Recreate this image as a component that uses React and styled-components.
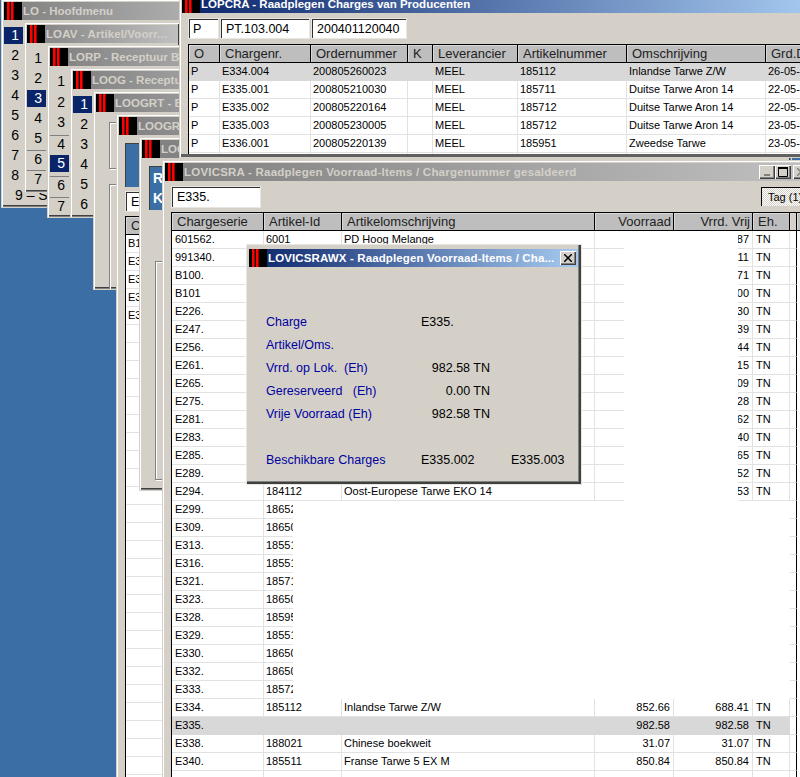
import React from 'react';
import styled, { createGlobalStyle } from 'styled-components';

const GlobalStyle = createGlobalStyle`
	html, body {
		margin: 0;
		padding: 0;
		background: #3a6ea5;
	}
	* {
		box-sizing: border-box;
	}
`;

const Desktop = styled.div`
	position: relative;
	width: 800px;
	height: 777px;
	overflow: hidden;
	background: #3a6ea5;
	font-family: 'Liberation Sans', Arial, sans-serif;
	font-size: 11px;
	color: #000;
`;

const Window = styled.div`
	position: absolute;
	left: ${(p) => p.$x}px;
	top: ${(p) => p.$y}px;
	width: ${(p) => p.$w}px;
	height: ${(p) => p.$h}px;
	padding: 2px;
	overflow: hidden;
	background: #d4d0c8;
	border: 1px solid #d4d0c8;
	box-shadow: inset 1px 1px 0 #fff, inset -1px -1px 0 #808080, inset -2px -2px 0 #404040;
`;

const ProducerWindow = styled(Window)`
	padding-bottom: 3px;
	box-shadow: inset 1px 1px 0 #fff, inset 0 -3px 0 #606060;
`;

const Dialog = styled(Window)`
	padding: 4px 3px 3px 2px;
	border-color: #e8e6e0;
	box-shadow: inset -1px -1px 0 #404040, inset -2px -2px 0 #404040, inset -3px -3px 0 #808080;
`;

const Pane = styled.div`
	height: 100%;
	overflow: hidden;
`;

const TitleBar = styled.div`
	display: flex;
	align-items: center;
	height: 18px;
	padding-right: 2px;
	background: ${(p) =>
		p.$active ? 'linear-gradient(90deg, #0a246a, #a6caf0)' : 'linear-gradient(90deg, #808080, #c0c0c0)'};
	color: ${(p) => (p.$active ? '#fff' : '#d4d0c8')};
`;

const TitleText = styled.span`
	flex: 1;
	margin-left: 1px;
	overflow: hidden;
	white-space: nowrap;
	font-family: 'Liberation Sans', Arial, sans-serif;
	font-weight: bold;
	font-size: 11.5px;
	letter-spacing: ${(p) => p.$track || 0}px;
`;

const CaptionButton = styled.button`
	display: flex;
	flex: none;
	align-items: center;
	justify-content: center;
	width: 16px;
	height: 14px;
	margin-left: ${(p) => p.$gap || 0}px;
	padding: 0;
	border: 0;
	background: #d4d0c8;
	box-shadow: inset 1px 1px 0 #fff, inset -1px -1px 0 #404040, inset -2px -2px 0 #808080;
`;

const MenuList = styled.div`
	display: flex;
	flex-direction: column;
	padding-top: 7px;
`;

const MenuItem = styled.div`
	display: flex;
	align-items: flex-start;
	height: ${(p) => p.$step || 20}px;
	font-size: 14px;
	line-height: 16px;
	white-space: nowrap;
`;

const MenuNumber = styled.span`
	width: ${(p) => (p.$wide ? 'auto' : '19px')};
	height: 17px;
	margin-left: ${(p) => (p.$wide ? '11px' : '0')};
	padding-right: 4px;
	text-align: right;
	background: ${(p) => (p.$selected ? '#0a246a' : 'transparent')};
	color: ${(p) => (p.$selected ? '#fff' : '#000')};
	border-top: ${(p) => (p.$rule ? '1px solid #808080' : '0')};
`;

const GroupStack = styled.div`
	display: flex;
	flex-direction: column;
	gap: 15px;
	padding: ${(p) => p.$top}px 0 0 ${(p) => p.$left}px;
`;

const GroupBox = styled.div`
	width: 60px;
	height: ${(p) => p.$h}px;
	border: 1px solid #808080;
	box-shadow: 1px 1px 0 #fff, inset 1px 1px 0 #fff;
`;

const BluePanel = styled.div`
	display: flex;
	flex-direction: column;
	gap: 3px;
	width: 120px;
	height: 44px;
	margin: 8px 0 0 ${(p) => p.$left}px;
	padding: 3px 0 0 3px;
	background: #3a6ea5;
	border-top: 1px solid #404040;
	border-left: 1px solid #404040;
	color: #fff;
	font-weight: bold;
	font-size: 14px;
	line-height: 17px;
`;

const Field = styled.div`
	flex: none;
	width: ${(p) => p.$w}px;
	height: ${(p) => p.$h || 21}px;
	padding-left: ${(p) => p.$pad || 4}px;
	background: #fff;
	border-top: 2px solid #303030;
	border-left: 2px solid #303030;
	border-right: 1px solid #d4d0c8;
	border-bottom: 1px solid #d4d0c8;
	outline: 1px solid #e8e6e0;
	outline-offset: -1px;
	font-size: 12.5px;
	line-height: 18px;
	white-space: nowrap;
	overflow: hidden;
`;

const FieldRow = styled.div`
	display: flex;
	gap: 1px;
	margin: ${(p) => p.$top}px 0 0 6px;
`;

const ToolRow = styled.div`
	display: flex;
	align-items: flex-start;
	margin: 5px 0 0 6px;
`;

const TagButton = styled.div`
	flex: none;
	width: 60px;
	height: 19px;
	margin: 1px 0 0 500px;
	padding: 2px 0 0 6px;
	border-top: 1px solid #000;
	border-left: 1px solid #000;
	background: repeating-conic-gradient(#fff 0 25%, #d4d0c8 0 50%) 0 0 / 2px 2px;
	font-size: 11px;
	line-height: 15px;
`;

const Table = styled.div`
	width: ${(p) => p.$w}px;
	margin: ${(p) => p.$top}px 0 0 ${(p) => p.$left}px;
	border-left: 1px solid #000;
	background: #fff;
`;

const HeaderRow = styled.div`
	display: grid;
	grid-template-columns: ${(p) => p.$cols};
	height: 19px;
	border-top: 1px solid #000;
	border-bottom: 1px solid #000;
	background: #bebebe;
`;

const HeaderCell = styled.div`
	padding: 0 ${(p) => (p.$right ? 2 : 0)}px 0 ${(p) => (p.$right ? 0 : 5)}px;
	border-right: 1px solid #000;
	background: ${(p) => (p.$plain ? '#d4d0c8' : '#bebebe')};
	box-shadow: inset 1px 1px 0 #d8d8d8;
	text-align: ${(p) => (p.$right ? 'right' : 'left')};
	font-size: 13px;
	line-height: 18px;
	color: #222;
	white-space: nowrap;
	overflow: hidden;
`;

const Body = styled.div`
	position: relative;
`;

const Row = styled.div`
	display: grid;
	grid-template-columns: ${(p) => p.$cols};
	height: 18px;
`;

const Cell = styled.div`
	padding: 0 ${(p) => (p.$right ? 3 : 2)}px 0 ${(p) => (p.$right ? 0 : p.$pad || 2)}px;
	border-right: 1px solid ${(p) => (p.$selected ? '#d8d8d8' : '#e2e2e2')};
	border-bottom: 1px solid ${(p) => (p.$selected ? '#d8d8d8' : '#e2e2e2')};
	background: ${(p) => (p.$selected ? '#d8d8d8' : '#fff')};
	text-align: ${(p) => (p.$right ? 'right' : 'left')};
	line-height: 17px;
	white-space: nowrap;
	overflow: hidden;
`;

const EdgeCell = styled.div`
	border-right: 1px solid #000;
	border-bottom: 1px solid #e2e2e2;
`;

const Repaint = styled.div`
	position: absolute;
	left: ${(p) => p.$x}px;
	top: ${(p) => p.$y}px;
	width: ${(p) => p.$w}px;
	height: ${(p) => p.$h}px;
	background: #fff;
`;

const DialogBody = styled.div`
	display: flex;
	flex-direction: column;
	padding: 44px 0 0 17px;
	color: #000;
	font-size: 12.5px;
`;

const InfoRow = styled.div`
	display: grid;
	grid-template-columns: 155px 69px 21px 70px;
	height: 23px;
	margin-top: ${(p) => p.$gap || 0}px;
	line-height: 23px;
	white-space: nowrap;
`;

const InfoLabel = styled.span`
	color: #0000a0;
`;

const InfoValue = styled.span`
	grid-column: ${(p) => p.$col || 2};
	text-align: ${(p) => (p.$right ? 'right' : 'left')};
`;

const Logo = () => (
	<svg width="18" height="18" viewBox="0 0 18 18" style={{ flex: 'none' }}>
		<rect width="18" height="18" fill="#000" />
		<rect x="3" width="2.6" height="18" fill="#f00" />
		<rect x="7" width="2.6" height="18" fill="#f00" />
	</svg>
);

const Title = ({ active, track, children }) => (
	<TitleBar $active={active}>
		<Logo />
		<TitleText $track={track}>{children}</TitleText>
	</TitleBar>
);

const Menu = ({ items }) => (
	<MenuList>
		{items.map((it) => (
			<MenuItem key={it.n} $step={it.step}>
				<MenuNumber $selected={it.selected} $rule={it.rule}>
					{it.n}
				</MenuNumber>
			</MenuItem>
		))}
	</MenuList>
);

const producerCols = '31px 91px 97px 25px 85px 109px 139px 100px';
const producerHead = ['O', 'Chargenr.', 'Ordernummer', 'K', 'Leverancier', 'Artikelnummer', 'Omschrijving', 'Grd.Datum'];
const producerRows = [
	['P', 'E334.004', '200805260023', '', 'MEEL', '185112', 'Inlandse Tarwe Z/W', '26-05-2008'],
	['P', 'E335.001', '200805210030', '', 'MEEL', '185711', 'Duitse Tarwe Aron 14', '22-05-2008'],
	['P', 'E335.002', '200805220164', '', 'MEEL', '185712', 'Duitse Tarwe Aron 14', '22-05-2008'],
	['P', 'E335.003', '200805230005', '', 'MEEL', '185712', 'Duitse Tarwe Aron 14', '23-05-2008'],
	['P', 'E336.001', '200805220139', '', 'MEEL', '185951', 'Zweedse Tarwe', '23-05-2008'],
	['', '', '', '', '', '', '', ''],
];

const stockCols = '92px 78px 253px 79px 79px 37px 7px 20px';
const stockRows = [
	['601562.', '6001', 'PD Hoog Melange', '', '12.87'],
	['991340.', '', '', '', '10.11'],
	['B100.', '', '', '', '20.71'],
	['B101', '', '', '', '10.00'],
	['E226.', '', '', '', '15.30'],
	['E247.', '', '', '', '12.39'],
	['E256.', '', '', '', '18.44'],
	['E261.', '', '', '', '14.15'],
	['E265.', '', '', '', '11.09'],
	['E275.', '', '', '', '13.28'],
	['E281.', '', '', '', '19.62'],
	['E283.', '', '', '', '16.40'],
	['E285.', '', '', '', '17.65'],
	['E289.', '', '', '', '21.52'],
	['E294.', '184112', 'Oost-Europese Tarwe EKO 14', '', '22.53'],
	['E299.', '186521'],
	['E309.', '186501'],
	['E313.', '185511'],
	['E316.', '185511'],
	['E321.', '185711'],
	['E323.', '186501'],
	['E328.', '185951'],
	['E329.', '185511'],
	['E330.', '186501'],
	['E332.', '186501'],
	['E333.', '185721'],
	['E334.', '185112', 'Inlandse Tarwe Z/W', '852.66', '688.41'],
	['E335.', '', '', '982.58', '982.58', true],
	['E338.', '188021', 'Chinese boekweit', '31.07', '31.07'],
	['E340.', '185511', 'Franse Tarwe 5 EX M', '850.84', '850.84'],
	['', '', '', '', '', false, true],
];

const sideRows = ['B100.', 'E335.', 'E335.', 'E335.', 'E336.'];

const App = () => {
	return (
		<Desktop>
			<GlobalStyle />

			<Window $x={1} $y={-1} $w={260} $h={209}>
				<Title>LO - Hoofdmenu</Title>
				<MenuList>
					{[1, 2, 3, 4, 5, 6, 7, 8].map((n) => (
						<MenuItem key={n}>
							<MenuNumber $selected={n === 1}>{n}</MenuNumber>
						</MenuItem>
					))}
					<MenuItem>
						<MenuNumber $wide>9 – Systeem</MenuNumber>
					</MenuItem>
				</MenuList>
			</Window>

			<Window $x={24} $y={22} $w={157} $h={171}>
				<Title track={0.1}>LOAV - Artikel/Voorr...</Title>
				<Menu
					items={[
						{ n: 1 },
						{ n: 2 },
						{ n: 3, selected: true },
						{ n: 4 },
						{ n: 5 },
						{ n: 6, rule: true },
						{ n: 7, rule: true },
					]}
				/>
			</Window>

			<Window $x={47} $y={45} $w={240} $h={173}>
				<Title>LORP - Receptuur Beheer</Title>
				<Menu
					items={[
						{ n: 1, step: 21 },
						{ n: 2, step: 20 },
						{ n: 3, step: 21 },
						{ n: 4, step: 20, rule: true },
						{ n: 5, step: 21, selected: true },
						{ n: 6, step: 21, rule: true },
						{ n: 7, rule: true },
					]}
				/>
			</Window>

			<Window $x={70} $y={68} $w={240} $h={150}>
				<Title>LOOG - Receptuur</Title>
				<Menu
					items={[{ n: 1, selected: true }, { n: 2 }, { n: 3 }, { n: 4 }, { n: 5 }, { n: 6 }]}
				/>
			</Window>

			<Window $x={93} $y={91} $w={240} $h={199}>
				<Title>LOOGRT - Beheer</Title>
				<GroupStack $top={10} $left={13}>
					<GroupBox $h={47} />
					<GroupBox $h={120} />
				</GroupStack>
			</Window>

			<Window $x={116} $y={114} $w={300} $h={680}>
				<Title>LOOGR - Beheer</Title>
				<BluePanel $left={6} />
				<FieldRow $top={4}>
					<Field $w={120}>E335.</Field>
				</FieldRow>
				<Table $w={120} $top={4} $left={6}>
					<HeaderRow $cols="100px 20px">
						<HeaderCell>Charge</HeaderCell>
						<HeaderCell />
					</HeaderRow>
					<Body>
						{Array.from({ length: 31 }, (_, i) => (
							<Row key={i} $cols="100px 20px">
								<Cell>{sideRows[i]}</Cell>
								<Cell />
							</Row>
						))}
					</Body>
				</Table>
			</Window>

			<Window $x={139} $y={137} $w={653} $h={354}>
				<Title>LOOGR - Beheer</Title>
				<BluePanel $left={7}>
					<span>R</span>
					<span>K</span>
				</BluePanel>
				<GroupStack $top={51} $left={13}>
					<GroupBox $h={219} />
				</GroupStack>
			</Window>

			<ProducerWindow $x={179} $y={-8} $w={640} $h={166}>
				<Pane>
					<Title active>LOPCRA - Raadplegen Charges van Producenten</Title>
					<FieldRow $top={5}>
						<Field $w={31} $pad={3}>P</Field>
						<Field $w={90}>PT.103.004</Field>
						<Field $w={96}>200401120040</Field>
					</FieldRow>
					<Table $w={640} $top={5} $left={6}>
						<HeaderRow $cols={producerCols}>
							{producerHead.map((h) => (
								<HeaderCell key={h}>{h}</HeaderCell>
							))}
						</HeaderRow>
						<Body>
							{producerRows.map((r, i) => (
								<Row key={i} $cols={producerCols}>
									{r.map((c, j) => (
										<Cell key={j} $selected={i === 0}>
											{c}
										</Cell>
									))}
								</Row>
							))}
						</Body>
					</Table>
				</Pane>
			</ProducerWindow>

			<Window $x={162} $y={160} $w={652} $h={640}>
				<TitleBar>
					<Logo />
					<TitleText $track={0.21}>LOVICSRA - Raadplegen Voorraad-Items / Chargenummer gesaldeerd</TitleText>
					<CaptionButton>
						<svg width="8" height="8" viewBox="0 0 8 8">
							<rect x="1" y="6" width="6" height="2" fill="#808080" />
						</svg>
					</CaptionButton>
					<CaptionButton>
						<svg width="10" height="10" viewBox="0 0 10 10">
							<path d="M0.5 1.5h9v8h-9z" fill="none" stroke="#000" />
							<rect y="0" width="10" height="2" fill="#000" />
						</svg>
					</CaptionButton>
					<CaptionButton $gap={2}>
						<svg width="8" height="8" viewBox="0 0 8 8">
							<path d="M0 0l8 8M8 0l-8 8" stroke="#808080" strokeWidth="1.5" />
						</svg>
					</CaptionButton>
				</TitleBar>
				<ToolRow>
					<Field $w={90} $h={22}>E335.</Field>
					<TagButton>Tag (1)</TagButton>
				</ToolRow>
				<Table $w={650} $top={4} $left={6}>
					<HeaderRow $cols={stockCols}>
						<HeaderCell>Chargeserie</HeaderCell>
						<HeaderCell>Artikel-Id</HeaderCell>
						<HeaderCell>Artikelomschrijving</HeaderCell>
						<HeaderCell $right>Voorraad</HeaderCell>
						<HeaderCell $right>Vrrd. Vrij</HeaderCell>
						<HeaderCell>Eh.</HeaderCell>
						<HeaderCell $plain />
						<HeaderCell />
					</HeaderRow>
					<Body>
						{stockRows.map((r, i) => (
							<Row key={i} $cols={stockCols}>
								<Cell $pad={3} $selected={r[5]}>{r[0]}</Cell>
								<Cell $selected={r[5]}>{r[1]}</Cell>
								<Cell $selected={r[5]}>{r[2]}</Cell>
								<Cell $right $selected={r[5]}>{r[3]}</Cell>
								<Cell $right $selected={r[5]}>{r[4]}</Cell>
								<Cell $pad={3} $selected={r[5]}>{r[6] ? '' : 'TN'}</Cell>
								<EdgeCell />
							</Row>
						))}
						<Repaint $x={452} $y={0} $w={114} $h={270} />
						<Repaint $x={121} $y={270} $w={497} $h={198} />
					</Body>
				</Table>
			</Window>

			<Dialog $x={246} $y={244} $w={336} $h={241}>
				<TitleBar $active>
					<Logo />
					<TitleText $track={0.13}>LOVICSRAWX - Raadplegen Voorraad-Items / Cha...</TitleText>
					<CaptionButton>
						<svg width="8" height="8" viewBox="0 0 8 8">
							<path d="M0 0l8 8M8 0l-8 8" stroke="#000" strokeWidth="1.5" />
						</svg>
					</CaptionButton>
				</TitleBar>
				<DialogBody>
					<InfoRow>
						<InfoLabel>Charge</InfoLabel>
						<InfoValue>E335.</InfoValue>
					</InfoRow>
					<InfoRow>
						<InfoLabel>Artikel/Oms.</InfoLabel>
					</InfoRow>
					<InfoRow>
						<InfoLabel>Vrrd. op Lok.&nbsp; (Eh)</InfoLabel>
						<InfoValue $right>982.58 TN</InfoValue>
					</InfoRow>
					<InfoRow>
						<InfoLabel>Gereserveerd &nbsp; (Eh)</InfoLabel>
						<InfoValue $right>0.00 TN</InfoValue>
					</InfoRow>
					<InfoRow>
						<InfoLabel>Vrije Voorraad (Eh)</InfoLabel>
						<InfoValue $right>982.58 TN</InfoValue>
					</InfoRow>
					<InfoRow $gap={23}>
						<InfoLabel>Beschikbare Charges</InfoLabel>
						<InfoValue>E335.002</InfoValue>
						<InfoValue $col={4}>E335.003</InfoValue>
					</InfoRow>
				</DialogBody>
			</Dialog>
		</Desktop>
	);
};

export default App;
